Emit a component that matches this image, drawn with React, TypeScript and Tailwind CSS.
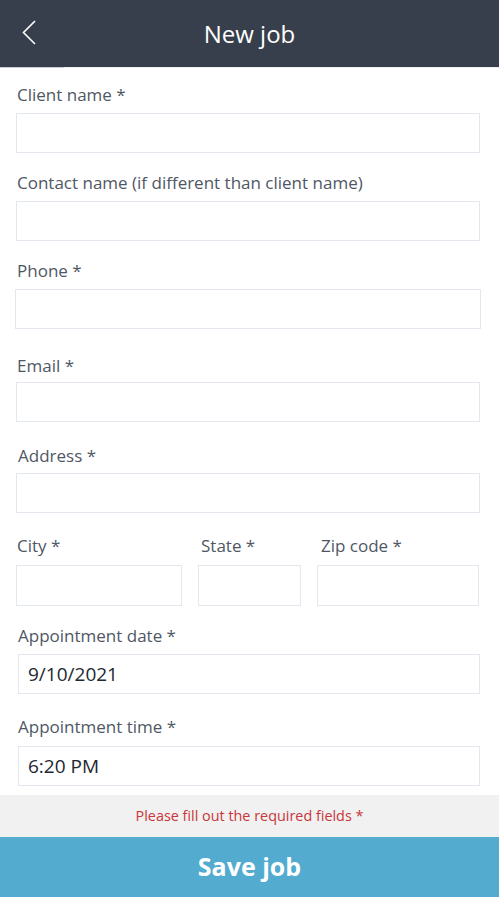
import React from "react";

const font = { fontFamily: '"Open Sans", "Noto Sans", Arial, sans-serif' };

function Field({
  label,
  value,
  className = "",
  labelClass = "",
  inputClass = "",
}: {
  label: string;
  value?: string;
  className?: string;
  labelClass?: string;
  inputClass?: string;
}) {
  return (
    <div className={className}>
      <div className={"text-[17px] leading-6 text-[#4f5764] " + labelClass}>{label}</div>
      <div
        className={
          "h-10 border border-[#e3e7ee] bg-white flex items-center pl-[9px] text-[19px] text-[#222831] " +
          inputClass
        }
      >
        {value}
      </div>
    </div>
  );
}

export default function App() {
  return (
    <div className="w-[499px] h-[897px] bg-white flex flex-col overflow-hidden" style={font}>
      {/* header */}
      <div className="h-[67px] bg-[#383f4c] flex items-center relative shrink-0">
        <svg
          className="absolute left-[21px] top-[19px]"
          width="16"
          height="27"
          viewBox="0 0 16 27"
          fill="none"
        >
          <path d="M14 2 L2.5 13.5 L14 25" stroke="white" strokeWidth="1.6" />
        </svg>
        <div className="w-full text-center text-white text-[24px] font-normal">New job</div>
      </div>
      <div className="flex h-px shrink-0">
        <div className="w-16 bg-[#c9ccd2]" />
        <div className="flex-1 bg-[#eceef1]" />
      </div>

      {/* form */}
      <div className="flex-1 pl-4 pr-[19px]">
        <Field label="Client name *" className="mt-[15px]" labelClass="pl-px mb-[6px]" />
        <Field
          label="Contact name (if different than client name)"
          className="mt-[18px]"
          labelClass="pl-px mb-[6px]"
        />
        <Field
          label="Phone *"
          className="mt-[18px]"
          labelClass="pl-px mb-[6px]"
          inputClass="-mx-px"
        />
        <Field label="Email *" className="mt-[25px]" labelClass="pl-px mb-1" />
        <Field label="Address *" className="mt-[22px]" labelClass="pl-[2px] mb-[5px]" />

        <div className="mt-[21px] grid grid-cols-[166px_103px_162px] gap-x-4">
          <div>
            <div className="text-[17px] leading-6 text-[#4f5764] pl-px mb-[7px]">City *</div>
            <div className="h-[41px] border border-[#e3e7ee]" />
          </div>
          <div>
            <div className="text-[17px] leading-6 text-[#4f5764] pl-[3px] mb-[7px]">State *</div>
            <div className="h-[41px] border border-[#e3e7ee]" />
          </div>
          <div>
            <div className="text-[17px] leading-6 text-[#4f5764] pl-1 mb-[7px]">Zip code *</div>
            <div className="h-[41px] border border-[#e3e7ee]" />
          </div>
        </div>

        <Field
          label="Appointment date *"
          value="9/10/2021"
          className="mt-[18px] pl-[2px]"
          labelClass="mb-[6px]"
        />
        <Field
          label="Appointment time *"
          value="6:20 PM"
          className="mt-[21px] pl-[2px]"
          labelClass="mb-[7px]"
        />
      </div>

      {/* footer */}
      <div className="h-[42px] bg-[#f1f1f1] flex items-center justify-center text-[14.4px] text-[#c8353a] shrink-0">
        Please fill out the required fields *
      </div>
      <div className="h-[60px] bg-[#53abcf] flex items-center justify-center text-white text-[25px] font-bold shrink-0">
        Save job
      </div>
    </div>
  );
}
